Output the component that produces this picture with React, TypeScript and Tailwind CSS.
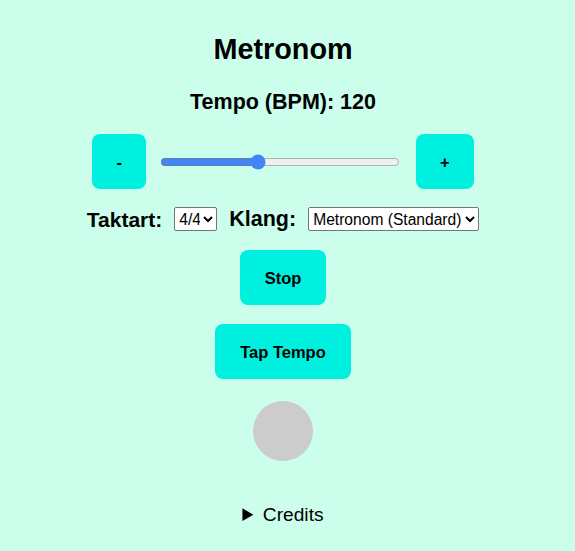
import React, { useState } from 'react';

const App: React.FC = () => {
  const [bpm, setBpm] = useState(120);

  return (
    <div className="min-h-screen w-full bg-[#ccffeb] text-black font-['Liberation_Sans',Arial,sans-serif]">
      <div className="flex flex-col items-center pr-[9px] pt-[35px]">
        <h1 className="text-[28.8px] font-bold leading-none">Metronom</h1>

        <h2 className="mt-[28px] text-[21.5px] font-bold leading-none">Tempo (BPM): {bpm}</h2>

        {/* tempo controls */}
        <div className="mt-[21px] flex items-center">
          <button
            className="h-[55px] rounded-lg bg-[#00f0e0] px-[24px] text-[16.5px] font-bold leading-none"
            onClick={() => setBpm((b) => Math.max(40, b - 1))}
          >
            -
          </button>
          <input
            type="range"
            min={40}
            max={240}
            value={bpm}
            onChange={(e) => setBpm(Number(e.target.value))}
            className="ml-[14px] mr-[16px] w-[240px] accent-[#4285f4]"
          />
          <button
            className="h-[55px] rounded-lg bg-[#00f0e0] px-[24px] text-[16.5px] font-bold leading-none"
            onClick={() => setBpm((b) => Math.min(240, b + 1))}
          >
            +
          </button>
        </div>

        {/* time signature and sound */}
        <div className="mt-[18px] flex h-[24px] items-center gap-3">
          <label className="text-[21px] font-bold leading-none">Taktart:</label>
          <select className="h-[24px] w-[43px] rounded-[2px] border border-[#767676] bg-white text-[15.6px] leading-none">
            <option>4/4</option>
            <option>3/4</option>
            <option>6/8</option>
          </select>
          <label className="text-[21.5px] font-bold leading-none">Klang:</label>
          <select className="h-[24px] w-[171px] rounded-[2px] border border-[#767676] bg-white text-[15.6px] leading-none">
            <option>Metronom (Standard)</option>
            <option>Holzblock</option>
            <option>Glocke</option>
          </select>
        </div>

        <button className="mt-[19px] h-[55px] rounded-lg bg-[#00f0e0] px-[25px] text-[16.5px] font-bold leading-none">
          Stop
        </button>

        <button className="mt-[19px] h-[55px] rounded-lg bg-[#00f0e0] px-[25px] text-[16.5px] font-bold leading-none">
          Tap Tempo
        </button>

        {/* beat indicator */}
        <div className="mt-[22px] h-[60px] w-[60px] rounded-full bg-[#cccccc]" />

        <details className="mt-[44px]">
          <summary className="cursor-pointer text-[19.2px] leading-none">Credits</summary>
        </details>
      </div>
    </div>
  );
};

export default App;
